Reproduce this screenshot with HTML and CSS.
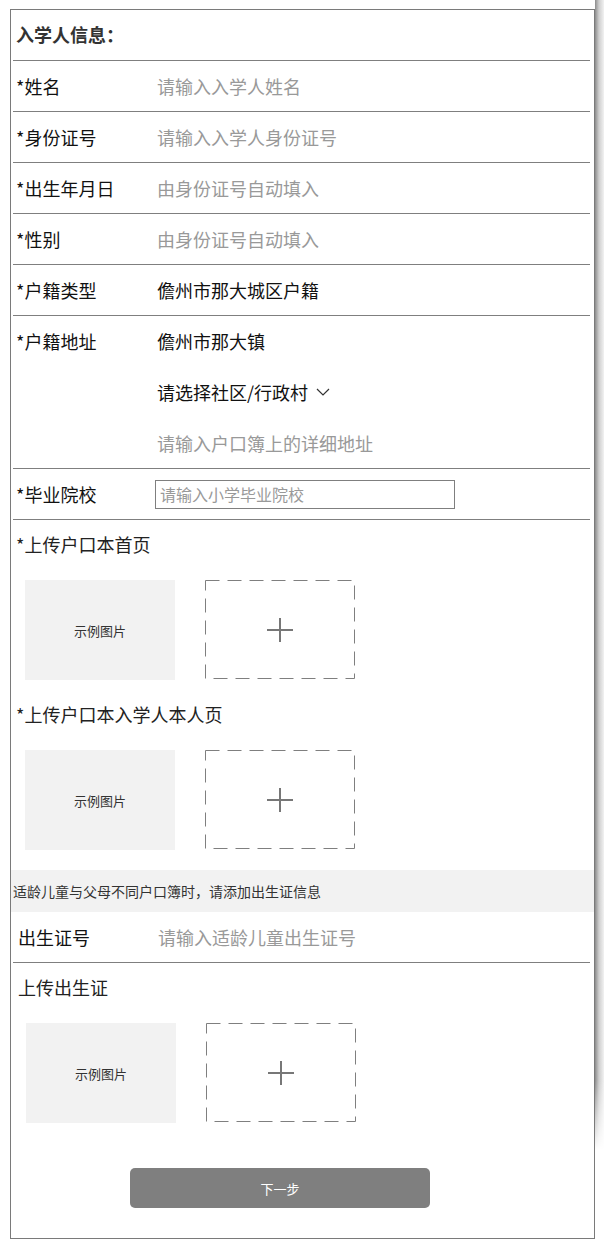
FILE: index.html
```html
<!DOCTYPE html>
<html lang="zh-CN">
<head>
  <meta charset="UTF-8" />
  <meta name="viewport" content="width=device-width, initial-scale=1.0" />
  <title>入学人信息</title>
  <link rel="stylesheet" href="styles.css">
</head>
<body>
  <div class="frame">
    <div class="row title">入学人信息：</div>

    <div class="row">
      <span class="label">*姓名</span>
      <span class="value hint">请输入入学人姓名</span>
    </div>
    <div class="row">
      <span class="label">*身份证号</span>
      <span class="value hint">请输入入学人身份证号</span>
    </div>
    <div class="row">
      <span class="label">*出生年月日</span>
      <span class="value hint">由身份证号自动填入</span>
    </div>
    <div class="row">
      <span class="label">*性别</span>
      <span class="value hint">由身份证号自动填入</span>
    </div>
    <div class="row">
      <span class="label">*户籍类型</span>
      <span class="value">儋州市那大城区户籍</span>
    </div>

    <div class="row address">
      <span class="label">*户籍地址</span>
      <div class="lines">
        <div class="line">儋州市那大镇</div>
        <div class="line">请选择社区/行政村
          <svg class="chevron" width="14" height="8" viewBox="0 0 14 8">
            <polyline points="1,1 7,7 13,1" fill="none" stroke="#333" stroke-width="1.2" />
          </svg>
        </div>
        <div class="line hint">请输入户口簿上的详细地址</div>
      </div>
    </div>

    <div class="row">
      <span class="label">*毕业院校</span>
      <div class="input">请输入小学毕业院校</div>
    </div>

    <div class="upload-title">*上传户口本首页</div>
    <div class="upload-row">
      <div class="sample">示例图片</div>
      <div class="add">
        <svg width="150" height="100" viewBox="0 0 150 100">
          <rect x="0.5" y="0.5" width="149" height="98" fill="none" stroke="#7f7f7f" stroke-dasharray="14 8" />
          <path d="M62 50 H88 M75 38 V62" stroke="#777" stroke-width="2" />
        </svg>
      </div>
    </div>

    <div class="upload-title">*上传户口本入学人本人页</div>
    <div class="upload-row">
      <div class="sample">示例图片</div>
      <div class="add">
        <svg width="150" height="100" viewBox="0 0 150 100">
          <rect x="0.5" y="0.5" width="149" height="98" fill="none" stroke="#7f7f7f" stroke-dasharray="14 8" />
          <path d="M62 50 H88 M75 38 V62" stroke="#777" stroke-width="2" />
        </svg>
      </div>
    </div>

    <div class="notice">适龄儿童与父母不同户口簿时，请添加出生证信息</div>

    <div class="row birth">
      <span class="label">出生证号</span>
      <span class="value hint">请输入适龄儿童出生证号</span>
    </div>

    <div class="upload-title birth">上传出生证</div>
    <div class="upload-row birth">
      <div class="sample">示例图片</div>
      <div class="add">
        <svg width="150" height="100" viewBox="0 0 150 100">
          <rect x="0.5" y="0.5" width="149" height="98" fill="none" stroke="#7f7f7f" stroke-dasharray="14 8" />
          <path d="M62 50 H88 M75 38 V62" stroke="#777" stroke-width="2" />
        </svg>
      </div>
    </div>

    <button class="next">下一步</button>
  </div>
</body>
</html>
```

FILE: styles.css
```css
body {
  margin: 0;
  font-family: "Noto Sans CJK SC", "Noto Sans", sans-serif;
  color: #111;
  background: #fff;
}
.frame {
  position: relative;
  margin: 9px 0 0 10px;
  width: 583px;
  border: 1px solid #7a7a7a;
  padding-bottom: 30px;
}
.frame::after {
  content: "";
  position: absolute;
  top: -10px;
  left: 100%;
  margin-left: 1px;
  width: 9px;
  height: 1150px;
  background: linear-gradient(to right, #8c8c8c, #cfcfcf 45%, #f2f2f2);
  -webkit-mask-image: linear-gradient(to bottom, #000 94%, transparent);
  mask-image: linear-gradient(to bottom, #000 94%, transparent);
}
.row {
  display: flex;
  align-items: center;
  height: 50px;
  margin: 0 4px 0 2px;
  padding-left: 3px;
  border-bottom: 1px solid #7f7f7f;
  font-size: 18px;
  line-height: 24px;
}
.row.title {
  font-weight: bold;
  color: #333;
  padding-bottom: 2px;
  height: 48px;
}
.label {
  width: 141px;
  flex-shrink: 0;
}
.hint {
  color: #999;
}
.row.address {
  height: 152px;
  align-items: flex-start;
}
.address .label {
  line-height: 50px;
}
.lines {
  display: flex;
  flex-direction: column;
}
.line {
  display: flex;
  align-items: center;
  height: 51px;
  padding-bottom: 1px;
  box-sizing: border-box;
}
.line:last-child {
  height: 50px;
}
.chevron {
  margin-left: 8px;
}
.input {
  width: 294px;
  height: 27px;
  margin-left: -2px;
  padding-left: 4px;
  border: 1px solid #7f7f7f;
  font-size: 16px;
  line-height: 27px;
  color: #999;
}
.upload-title {
  height: 50px;
  line-height: 48px;
  padding-left: 5px;
  font-size: 18px;
  color: #222;
}
.upload-row {
  display: flex;
  gap: 30px;
  margin: 10px 0 10px 14px;
}
.sample {
  width: 150px;
  height: 100px;
  display: flex;
  align-items: center;
  justify-content: center;
  background: #f2f2f2;
  font-size: 13px;
  color: #333;
}
.add svg {
  display: block;
}
.notice {
  height: 42px;
  line-height: 42px;
  margin-top: 20px;
  padding-left: 2px;
  background: #f2f2f2;
  font-size: 14px;
  color: #333;
}
.row.birth {
  padding-left: 5px;
}
.row.birth .label {
  width: 140px;
}
.upload-title.birth {
  padding-left: 7px;
}
.upload-row.birth {
  margin-left: 15px;
}
.next {
  display: block;
  width: 300px;
  height: 40px;
  margin: 45px 0 0 119px;
  border: none;
  border-radius: 5px;
  background: #7f7f7f;
  color: #fff;
  font-family: inherit;
  font-size: 13px;
}
```
